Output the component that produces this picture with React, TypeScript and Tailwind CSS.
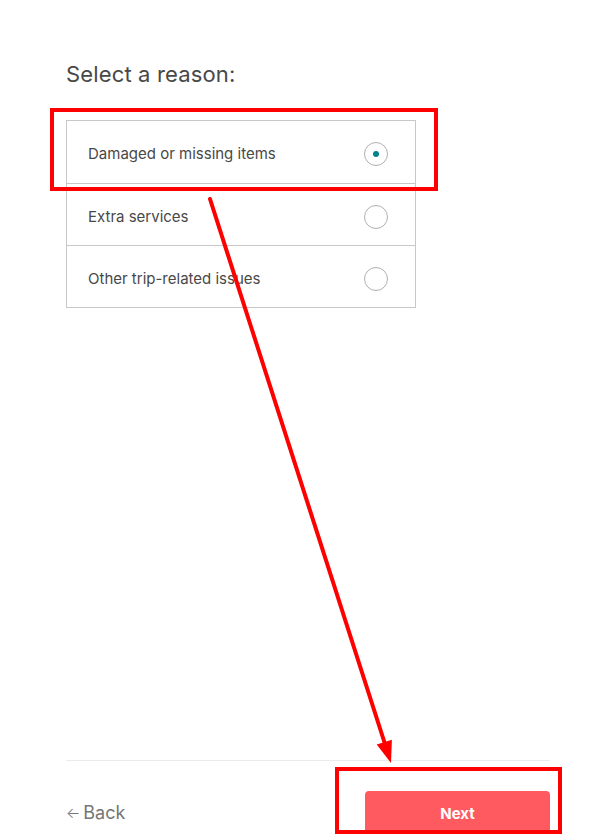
import { useState } from 'react';

const reasons = ['Damaged or missing items', 'Extra services', 'Other trip-related issues'];

export default function App() {
  const [selected, setSelected] = useState(0);

  return (
    <div className="relative h-[834px] w-[595px] overflow-hidden bg-white font-['Inter','Liberation_Sans',sans-serif] text-[#484848]">
      <div className="flex flex-col pl-[66px] pr-[45px]">
        <h2 className="mt-[60px] text-[22px] leading-[28px] font-normal tracking-[0.15px]">Select a reason:</h2>

        <div className="mt-[32px] w-[350px] border border-[#c8c8c8]">
          {reasons.map((reason, i) => (
            <button
              key={reason}
              type="button"
              onClick={() => setSelected(i)}
              className={`flex h-[62px] w-full items-center justify-between pt-[4px] pl-[21px] pr-[27px] text-left ${i > 0 ? 'border-t border-[#c8c8c8]' : ''}`}
            >
              <span className="text-[15px] leading-5">{reason}</span>
              <span className="flex h-6 w-6 items-center justify-center rounded-full border border-[#b0b0b0]">
                {selected === i && <span className="h-[6px] w-[6px] rounded-full bg-[#008489]" />}
              </span>
            </button>
          ))}
        </div>

        <div className="mt-[452px] border-t border-[#ebebeb]" />

        <div className="flex items-start justify-between pt-[30px]">
          <button type="button" className="mt-[10px] flex items-center gap-[3px] text-[18px] leading-6 text-[#767676]">
            <span className="text-[15px] font-light">←</span>
            <span>Back</span>
          </button>
          <button type="button" className="h-[46px] w-[185px] rounded-[4px] bg-[#ff5a5f] text-[15px] font-bold text-white">
            Next
          </button>
        </div>
      </div>

      <svg className="pointer-events-none absolute inset-0" width="595" height="834" viewBox="0 0 595 834">
        <rect x="52" y="110" width="384" height="79" fill="none" stroke="#ff0000" strokeWidth="4" />
        <rect x="337" y="769" width="223" height="63" fill="none" stroke="#ff0000" strokeWidth="4" />
        <line x1="210" y1="199" x2="385" y2="744" stroke="#ff0000" strokeWidth="4" strokeLinecap="round" />
        <polygon points="391,763 376.7,744.5 391.9,739.7" fill="#ff0000" />
      </svg>
    </div>
  );
}
